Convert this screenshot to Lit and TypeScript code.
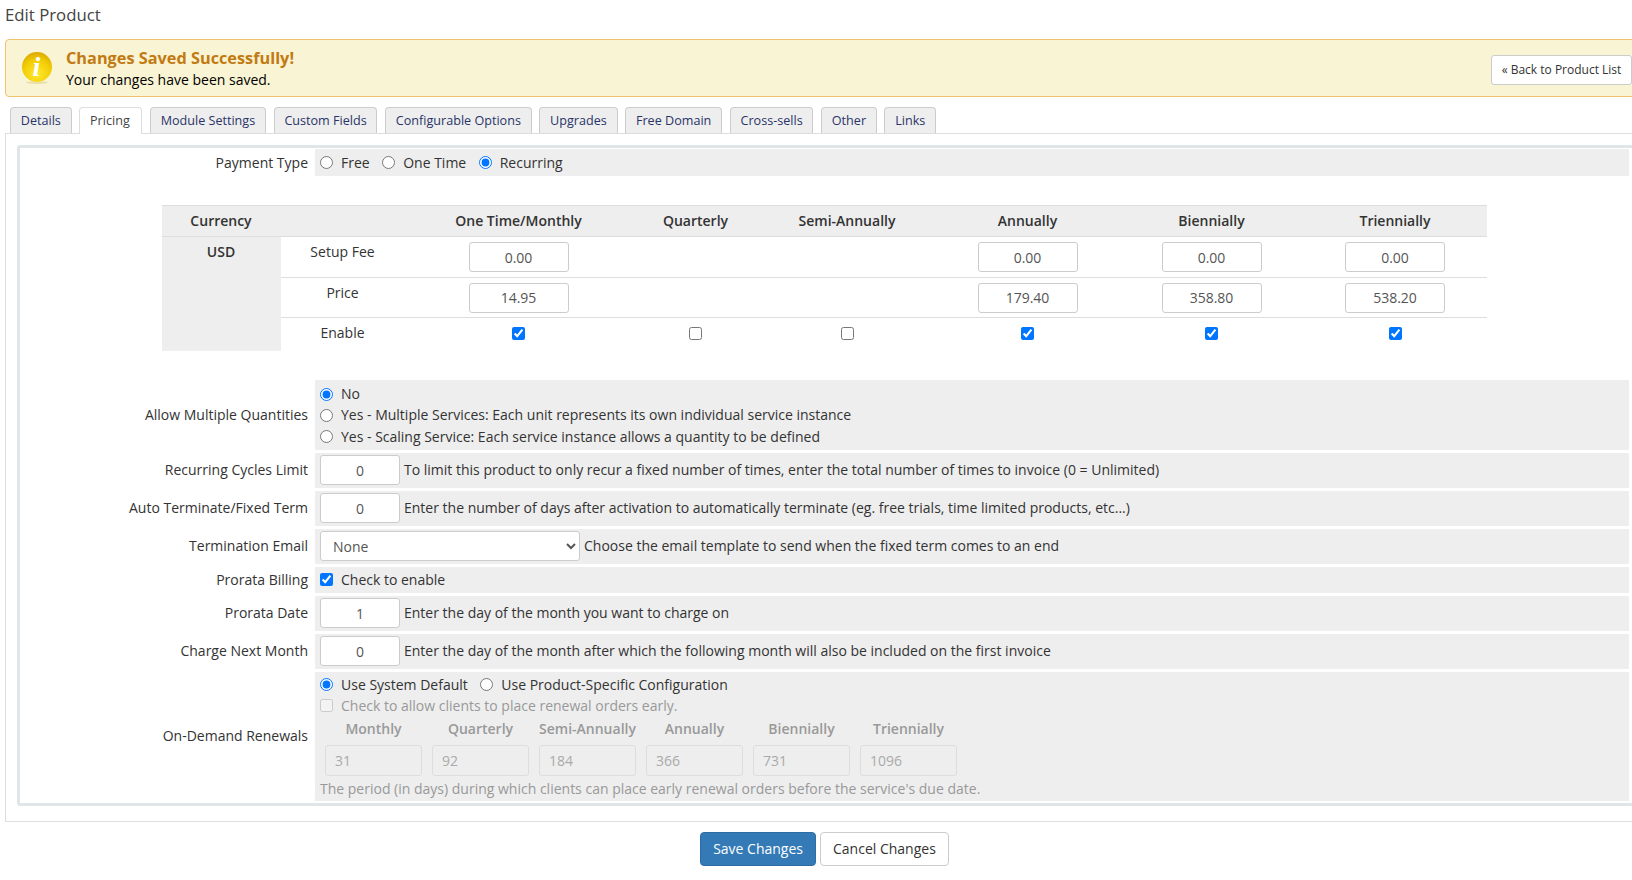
import { LitElement, html, css } from "lit";
import { customElement } from "lit/decorators.js";

const tabs = ["Details","Pricing","Module Settings","Custom Fields","Configurable Options","Upgrades","Free Domain","Cross-sells","Other","Links"];
const cols = ["One Time/Monthly","Quarterly","Semi-Annually","Annually","Biennially","Triennially"];
const setup: (string|null)[] = ["0.00",null,null,"0.00","0.00","0.00"];
const price: (string|null)[] = ["14.95",null,null,"179.40","358.80","538.20"];
const enable = [true,false,false,true,true,true];
const renew = [["Monthly","31"],["Quarterly","92"],["Semi-Annually","184"],["Annually","366"],["Biennially","731"],["Triennially","1096"]];

@customElement("app-root")
export class AppRoot extends LitElement {
  static styles = css`
    :host { display:block; width:1632px; height:880px; overflow:hidden; background:#fff; font-family:"Open Sans",sans-serif; font-size:14px; color:#333; line-height:20px; box-sizing:border-box; }
    * { box-sizing:border-box; }
    .title { font-size:16.8px; line-height:22px; color:#444; padding:4px 0 0 5px; height:39px; }
    .alert { display:flex; align-items:center; width:1635px; height:58px; margin-left:5px; border:1px solid #f0c36d; border-radius:4px; background:#f9f4d3; padding:0 7px 0 16px; color:#000; }
    .icon { width:32px; height:32px; flex:none; margin-right:12px; overflow:visible; }
    .alert-text { flex:1; }
    .alert-h { font-size:16.3px; font-weight:700; color:#c27a12; line-height:23px; }
    .alert-p { line-height:20px; }
    .back { flex:none; display:block; width:141px; height:30px; margin-top:4px; background:#fff; border:1px solid #ccc; border-radius:3px; font-size:12px; line-height:28px; text-align:center; color:#333; white-space:nowrap; }
    .tabs { display:flex; gap:7.6px; padding:10px 0 0 10px; height:36px; position:relative; }
    .tab { height:26px; padding:0 9.8px; border:1px solid #ccc; border-bottom:none; border-radius:4px 4px 0 0; background:#eee; color:#2a3468; font-size:12.6px; line-height:25px; white-space:nowrap; }
    .tab.on { background:#fff; color:#444; border-color:#ddd; height:27px; padding-right:11.5px; position:relative; z-index:1; }
    .panel { margin-left:5px; width:1640px; height:689px; border:1px solid #ddd; padding:11px 0 0 11px; }
    .box { width:1630px; height:661px; border:3px solid #e0e6e8; border-radius:3px; padding:1px 2px; }
    .row { display:grid; grid-template-columns:293px 1314px; margin-bottom:3px; }
    .lab { text-align:right; padding-right:7px; align-self:center; white-space:nowrap; }
    .val { background:#eee; padding:0 5px; display:flex; align-items:center; white-space:nowrap; }
    .h28 { height:27px; }
    .opt { display:flex; align-items:center; margin-right:12.5px; }
    input[type=radio], input[type=checkbox] { width:13px; height:13px; margin:0 8px 0 0; flex:none; accent-color:#0075ff; }
    table { border-collapse:collapse; table-layout:fixed; width:1325px; margin:29px 0 29px 139.5px; }
    th { background:#eee; font-weight:600; height:31px; padding:0; text-align:center; border-top:1px solid #ddd; border-bottom:1px solid #ddd; }
    td { padding:0; text-align:center; height:40.5px; border-bottom:1px solid #ddd; vertical-align:top; }
    tr:last-child td { border-bottom:none; height:33px; }
    td.cur { background:#eee; font-weight:600; padding-top:5px; border-bottom:none; }
    td.l { padding-top:5px; }
    td.v { padding-top:5px; }
    td.c input { margin:9px 0 0; vertical-align:top; }
    tr:last-child td.l { padding-top:5px; }
    .num { display:inline-block; width:100px; height:30px; border:1px solid #ccc; border-radius:3px; background:#fff; font:14px "Open Sans",sans-serif; color:#555; text-align:center; padding:0; vertical-align:top; }
    .short { width:80px; flex:none; margin-right:4px; }
    .sel { width:260px; height:30px; flex:none; margin-right:4px; border:1px solid #ccc; border-radius:3px; background:#fff; font:14px "Open Sans",sans-serif; color:#555; padding:0 8px; }
    .stack { flex-direction:column; align-items:stretch; padding-top:4px; padding-bottom:2px; }
    .line { display:flex; align-items:center; height:22px; }
    .h-qty { height:70px; }
    .h-inp { height:35px; }
    .h-pro { height:26px; }
    .h-dem { height:129px; padding-top:3px; }
    .dis { color:#999; margin-top:1px; }
    .grid { display:flex; margin:-1px 0 0 5px; gap:10px; }
    .rc { width:97px; text-align:center; font-weight:600; color:#999; line-height:28.5px; }
    .rc input { width:97px; height:31px; display:block; border:1px solid #ddd; border-radius:3px; background:#eee; color:#aaa; font:14px "Open Sans",sans-serif; padding:0 9px; margin-top:1px; }
    .note { color:#999; margin-top:3px; }
    .actions { display:flex; justify-content:center; gap:4px; padding:10px 0 0 17px; }
    button { height:34px; border-radius:4px; font:14px "Open Sans",sans-serif; padding:0 12px 2px; border:1px solid #ccc; background:#fff; color:#333; }
    button.p { background:#337ab7; border-color:#2e6da4; color:#fff; }
  `;
  cell(v:string|null){ return html`<td class="v">${v===null?"":html`<input class="num" .value=${v}>`}</td>`; }
  render() {
    return html`
      <div class="title">Edit Product</div>
      <div class="alert">
        <svg class="icon" viewBox="0 0 32 32" aria-hidden="true">
          <defs>
            <radialGradient id="g" cx="50%" cy="72%" r="72%"><stop offset="0" stop-color="#ffe92e"/><stop offset="0.65" stop-color="#f2cc05"/><stop offset="1" stop-color="#dba800"/></radialGradient>
          </defs>
          <ellipse cx="15" cy="30.5" rx="11" ry="1.5" fill="#eadfa8"/>
          <circle cx="15" cy="15" r="15" fill="url(#g)"/>
          <text x="14.5" y="24" font-family="Liberation Serif" font-style="italic" font-weight="700" font-size="28" text-anchor="middle" fill="#fff">i</text>
        </svg>
        <div class="alert-text">
          <div class="alert-h">Changes Saved Successfully!</div>
          <div class="alert-p">Your changes have been saved.</div>
        </div>
        <a class="back">« Back to Product List</a>
      </div>
      <div class="tabs">${tabs.map(t=>html`<div class="tab ${t==="Pricing"?"on":""}">${t}</div>`)}</div>
      <div class="panel"><div class="box">
        <div class="row">
          <div class="lab">Payment Type</div>
          <div class="val h28">
            <label class="opt"><input type="radio" name="pt">Free</label>
            <label class="opt"><input type="radio" name="pt">One Time</label>
            <label class="opt"><input type="radio" name="pt" checked>Recurring</label>
          </div>
        </div>
        <table>
          <colgroup><col style="width:119px"><col style="width:124px"><col style="width:228px"><col style="width:126px"><col style="width:177px"><col style="width:184px"><col style="width:184px"><col style="width:183px"></colgroup>
          <tr><th>Currency</th><th></th>${cols.map(c=>html`<th>${c}</th>`)}</tr>
          <tr><td class="cur" rowspan="3">USD</td><td class="l">Setup Fee</td>${setup.map(v=>this.cell(v))}</tr>
          <tr><td class="l">Price</td>${price.map(v=>this.cell(v))}</tr>
          <tr><td class="l">Enable</td>${enable.map(e=>html`<td class="c"><input type="checkbox" ?checked=${e}></td>`)}</tr>
        </table>
        <div class="row">
          <div class="lab">Allow Multiple Quantities</div>
          <div class="val stack h-qty">
            <label class="line"><input type="radio" name="q" checked>No</label>
            <label class="line"><input type="radio" name="q">Yes - Multiple Services: Each unit represents its own individual service instance</label>
            <label class="line"><input type="radio" name="q">Yes - Scaling Service: Each service instance allows a quantity to be defined</label>
          </div>
        </div>
        <div class="row"><div class="lab">Recurring Cycles Limit</div><div class="val h-inp"><input class="num short" .value=${"0"}>To limit this product to only recur a fixed number of times, enter the total number of times to invoice (0 = Unlimited)</div></div>
        <div class="row"><div class="lab">Auto Terminate/Fixed Term</div><div class="val h-inp"><input class="num short" .value=${"0"}>Enter the number of days after activation to automatically terminate (eg. free trials, time limited products, etc...)</div></div>
        <div class="row"><div class="lab">Termination Email</div><div class="val h-inp"><select class="sel"><option>None</option></select>Choose the email template to send when the fixed term comes to an end</div></div>
        <div class="row"><div class="lab">Prorata Billing</div><div class="val h-pro"><label class="opt"><input type="checkbox" checked>Check to enable</label></div></div>
        <div class="row"><div class="lab">Prorata Date</div><div class="val h-inp"><input class="num short" .value=${"1"}>Enter the day of the month you want to charge on</div></div>
        <div class="row"><div class="lab">Charge Next Month</div><div class="val h-inp"><input class="num short" .value=${"0"}>Enter the day of the month after which the following month will also be included on the first invoice</div></div>
        <div class="row">
          <div class="lab">On-Demand Renewals</div>
          <div class="val stack h-dem">
            <div class="line"><label class="opt"><input type="radio" name="r" checked>Use System Default</label><label class="opt"><input type="radio" name="r">Use Product-Specific Configuration</label></div>
            <label class="line dis"><input type="checkbox" disabled>Check to allow clients to place renewal orders early.</label>
            <div class="grid">${renew.map(([n,v])=>html`<div class="rc">${n}<input disabled .value=${v}></div>`)}</div>
            <div class="note">The period (in days) during which clients can place early renewal orders before the service's due date.</div>
          </div>
        </div>
      </div></div>
      <div class="actions"><button class="p">Save Changes</button><button>Cancel Changes</button></div>
    `;
  }
}
